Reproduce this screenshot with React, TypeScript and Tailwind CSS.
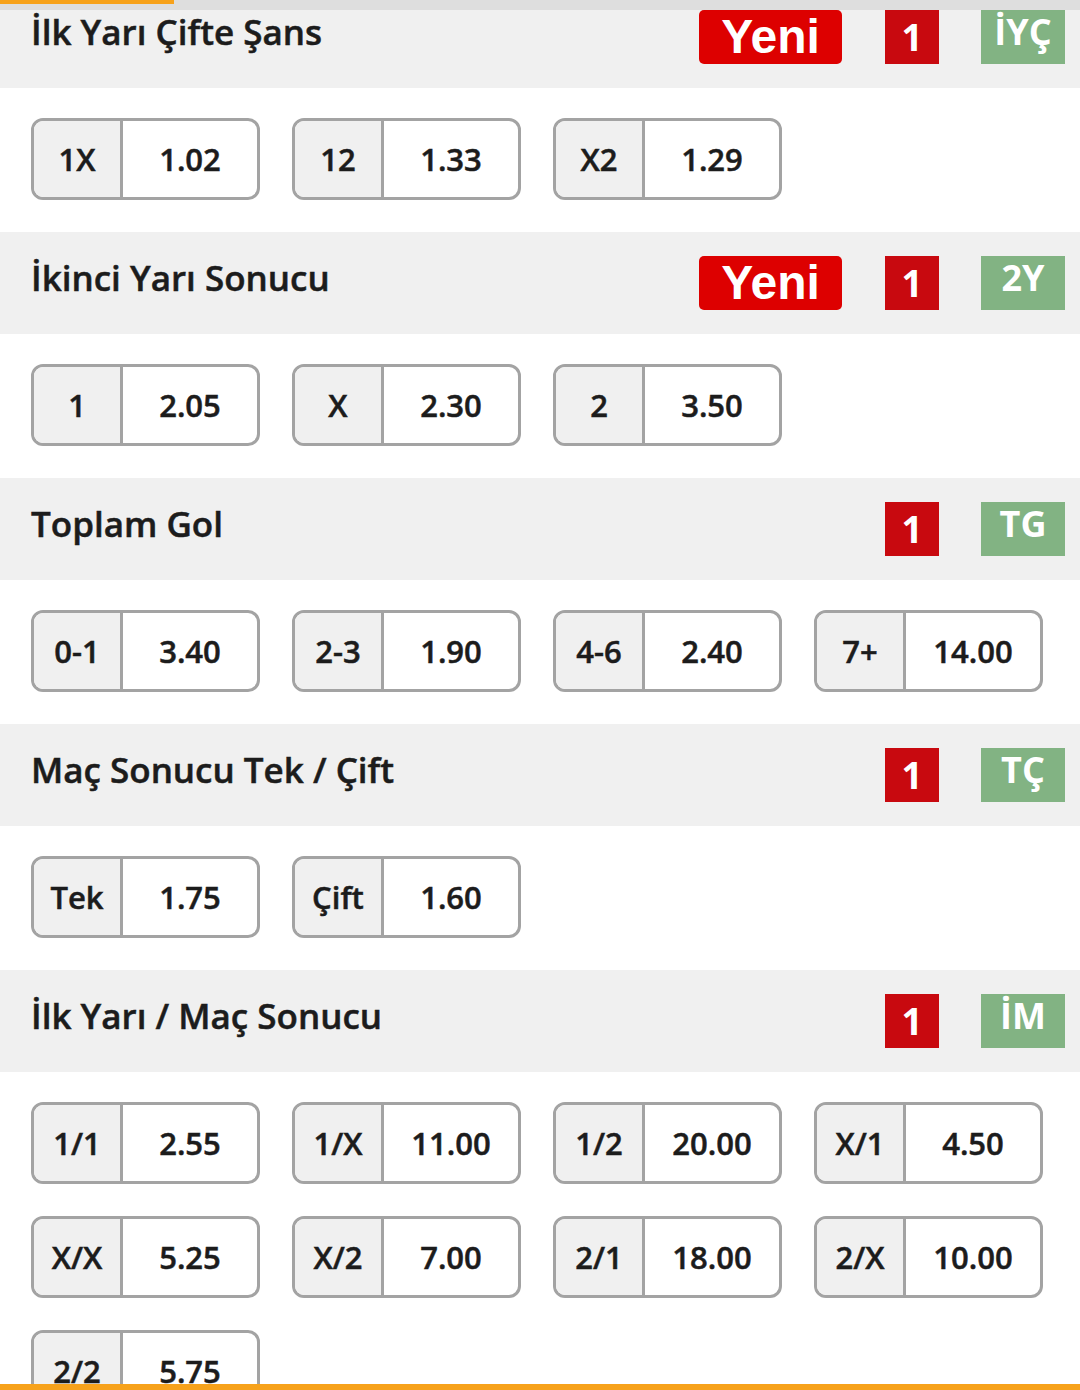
import React from "react";

type Odd = { label: string; value: string };

interface Market {
  title: string;
  isNew?: boolean;
  code: string;
  odds: Odd[];
}

const markets: Market[] = [
  {
    title: "İlk Yarı Çifte Şans",
    isNew: true,
    code: "İYÇ",
    odds: [
      { label: "1X", value: "1.02" },
      { label: "12", value: "1.33" },
      { label: "X2", value: "1.29" },
    ],
  },
  {
    title: "İkinci Yarı Sonucu",
    isNew: true,
    code: "2Y",
    odds: [
      { label: "1", value: "2.05" },
      { label: "X", value: "2.30" },
      { label: "2", value: "3.50" },
    ],
  },
  {
    title: "Toplam Gol",
    code: "TG",
    odds: [
      { label: "0-1", value: "3.40" },
      { label: "2-3", value: "1.90" },
      { label: "4-6", value: "2.40" },
      { label: "7+", value: "14.00" },
    ],
  },
  {
    title: "Maç Sonucu Tek / Çift",
    code: "TÇ",
    odds: [
      { label: "Tek", value: "1.75" },
      { label: "Çift", value: "1.60" },
    ],
  },
  {
    title: "İlk Yarı / Maç Sonucu",
    code: "İM",
    odds: [
      { label: "1/1", value: "2.55" },
      { label: "1/X", value: "11.00" },
      { label: "1/2", value: "20.00" },
      { label: "X/1", value: "4.50" },
      { label: "X/X", value: "5.25" },
      { label: "X/2", value: "7.00" },
      { label: "2/1", value: "18.00" },
      { label: "2/X", value: "10.00" },
      { label: "2/2", value: "5.75" },
    ],
  },
];

function OddButton({ label, value }: Odd) {
  return (
    <div className="flex h-[82px] w-[229px] overflow-hidden rounded-[12px] border-[3px] border-[#a3a3a3] bg-white text-[31px] font-semibold text-[#1c1c1c] [-webkit-text-stroke:0.5px_#1c1c1c]">
      <div className="flex w-[89px] shrink-0 items-center justify-center border-r-[3px] border-[#a3a3a3] bg-[#f0f0f0]">
        {label}
      </div>
      <div className="flex flex-1 items-center justify-center">{value}</div>
    </div>
  );
}

function MarketHeader({ title, isNew, code }: Market) {
  return (
    <div className="flex h-[102px] items-start bg-[#f0f0f0] pl-[31px] pr-[15px]">
      <h2 className="pt-[22px] text-[35px] font-semibold leading-[48px] text-[#1c1c1c] [-webkit-text-stroke:0.5px_#1c1c1c]">
        {title}
      </h2>
      <div className="ml-auto flex items-start pt-[24px]">
        {isNew && (
          <div className="mr-[43px] flex h-[54px] w-[143px] items-center justify-center rounded-[5px] bg-[#dd0000] font-['Liberation_Sans',Arial,sans-serif] text-[48px] font-bold text-white">
            Yeni
          </div>
        )}
        <div className="flex h-[54px] w-[54px] items-center justify-center bg-[#c8090f] text-[37px] font-bold text-white">
          1
        </div>
        <div className="ml-[42px] h-[54px] w-[84px] bg-[#82b383] text-center text-[36px] font-bold leading-[44px] text-white">
          {code}
        </div>
      </div>
    </div>
  );
}

export default function App() {
  return (
    <div className="flex h-[1390px] w-[1080px] flex-col overflow-hidden bg-white font-['Open_Sans',sans-serif]">
      {/* progress strip */}
      <div className="h-[10px] shrink-0 bg-[#dedede]">
        <div className="h-[4px] w-[174px] bg-[#f7a21b]" />
      </div>

      <div className="min-h-0 flex-1 overflow-hidden">
        <div className="-mt-[24px]">
          {markets.map((m) => (
            <section key={m.code}>
              <MarketHeader {...m} />
              <div className="grid grid-cols-[repeat(4,229px)] gap-[32px] px-[31px] pb-[32px] pt-[30px]">
                {m.odds.map((o) => (
                  <OddButton key={o.label} {...o} />
                ))}
              </div>
            </section>
          ))}
        </div>
      </div>

      <div className="h-[6px] shrink-0 bg-[#f7a21b]" />
    </div>
  );
}
